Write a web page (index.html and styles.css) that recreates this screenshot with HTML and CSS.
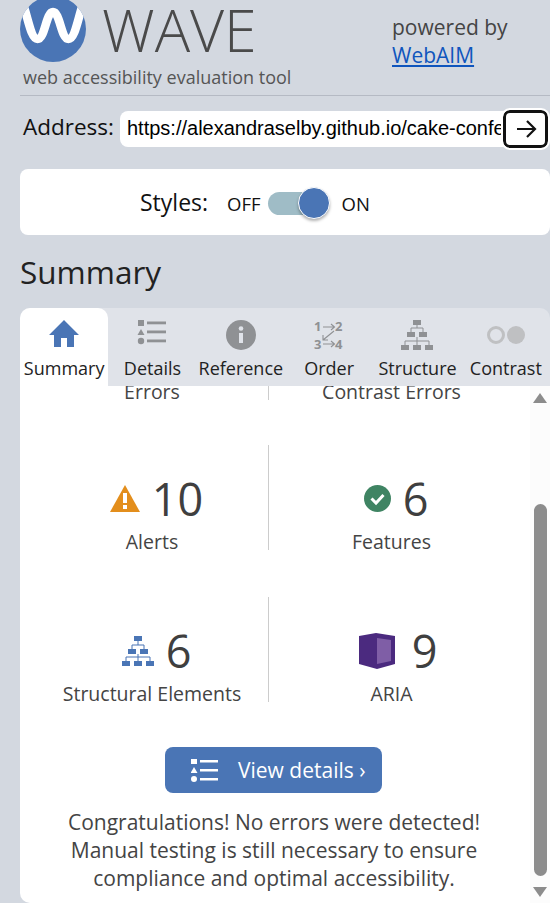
FILE: index.html
```html
<!DOCTYPE html>
<html lang="en">
<head>
    <meta charset="UTF-8">
    <meta name="viewport" content="width=device-width, initial-scale=1.0">
    <title>WAVE</title>
    <link rel="stylesheet" href="styles.css">
</head>
<body>
    <header class="site-header">
        <div class="brand">
            <div class="brand-top">
                <svg class="logo" width="66" height="66" viewBox="0 0 66 66">
                    <clipPath id="logo-clip"><circle cx="33" cy="33" r="33"/></clipPath>
                    <circle cx="33" cy="33" r="33" fill="#4a75b5"/>
                    <path d="M3 8 C8 22 11 43 17.500 43 C25 43 26 16 33 16 C40 16 41 43 48.500 43 C55 43 58 22 63 8" fill="none" stroke="#fff" stroke-width="8.500" clip-path="url(#logo-clip)"/>
                </svg>
                <span class="brand-name">WAVE</span>
            </div>
            <p class="brand-tagline">web accessibility evaluation tool</p>
        </div>
        <div class="powered">
            <span>powered by</span>
            <a href="#">WebAIM</a>
        </div>
    </header>

    <form class="address-bar">
        <label for="address">Address:</label>
        <div class="address-field">
            <input type="text" id="address" value="https://alexandraselby.github.io/cake-confections/">
            <button type="button" class="go-button" aria-label="Go">
                <svg width="22" height="20" viewBox="0 0 22 20"><path d="M2 10H20M12 2L20 10L12 18" fill="none" stroke="#111" stroke-width="2.2"/></svg>
            </button>
        </div>
    </form>

    <div class="styles-card">
        <span class="styles-label">Styles:</span>
        <span class="styles-state">OFF</span>
        <span class="toggle"><span class="toggle-knob"></span></span>
        <span class="styles-state">ON</span>
    </div>

    <h1 class="panel-title">Summary</h1>

    <section class="panel">
        <nav class="tabs">
            <a class="tab tab-active" href="#">
                <svg width="32" height="30" viewBox="0 2 32 30"><path d="M16 2L31 17H26V29H19V20H13V29H6V17H1Z" fill="#4a75b5"/></svg>
                Summary
            </a>
            <a class="tab" href="#">
                <svg width="30" height="30" viewBox="0 2 30 30" fill="#8f9194"><rect x="1" y="2" width="6" height="6"/><path d="M4 11L7.500 17H.5Z"/><circle cx="4" cy="23" r="3.200"/><rect x="10" y="3.500" width="19" height="2.800"/><rect x="10" y="12.500" width="19" height="2.800"/><rect x="10" y="21.500" width="19" height="2.800"/></svg>
                Details
            </a>
            <a class="tab" href="#">
                <svg width="30" height="30" viewBox="0 0 30 30"><circle cx="15" cy="15" r="15" fill="#8f9194"/><circle cx="15" cy="8.500" r="2.300" fill="#e0e3e9"/><rect x="13" y="13" width="4" height="10" fill="#e0e3e9"/></svg>
                Reference
            </a>
            <a class="tab" href="#">
                <svg width="30" height="30" viewBox="0 0 30 30">
                    <text x="0" y="11" class="order-num">1</text>
                    <text x="21" y="11" class="order-num">2</text>
                    <text x="0" y="29" class="order-num">3</text>
                    <text x="21" y="29" class="order-num">4</text>
                    <path d="M9 7H20M17 4L20.500 7L17 10M9 24H20M17 21L20.500 24L17 27M20 11L9 20M9 15V20H14" fill="none" stroke="#8f9194" stroke-width="1.100"/>
                </svg>
                Order
            </a>
            <a class="tab" href="#">
                <svg width="32" height="30" viewBox="0 0 32 30" fill="#8f9194">
                    <rect x="12" y="0" width="8" height="5"/><rect x="6" y="12" width="8" height="5"/><rect x="18" y="12" width="8" height="5"/><rect x="0" y="25" width="8" height="5"/><rect x="12" y="25" width="8" height="5"/><rect x="24" y="25" width="8" height="5"/>
                    <path d="M16 5V8M10 12V8H22V12M16 17V21M4 25V21H28V25M16 21V25" fill="none" stroke="#8f9194"/>
                </svg>
                Structure
            </a>
            <a class="tab" href="#">
                <svg width="38" height="30" viewBox="0 0 38 30"><circle cx="9" cy="15" r="7.500" fill="none" stroke="#bfc0c2" stroke-width="3"/><circle cx="29" cy="15" r="9" fill="#bfc0c2"/></svg>
                Contrast
            </a>
        </nav>

        <div class="panel-body">
            <div class="summary">
                <div class="summary-grid">
                    <div class="stat stat-top">
                        <div class="stat-count"></div>
                        <div class="stat-label">Errors</div>
                    </div>
                    <div class="stat stat-top stat-right">
                        <div class="stat-count"></div>
                        <div class="stat-label">Contrast Errors</div>
                    </div>
                    <div class="stat">
                        <div class="stat-count">
                            <svg width="30" height="28" viewBox="0 0 30 28"><path d="M15 0L30 27H0Z" fill="#e38e1c"/><rect x="13" y="8" width="4" height="10" fill="#fff"/><rect x="13" y="20" width="4" height="4" fill="#fff"/></svg>
                            10
                        </div>
                        <div class="stat-label">Alerts</div>
                    </div>
                    <div class="stat stat-right">
                        <div class="stat-count">
                            <svg width="27" height="27" viewBox="0 0 27 27"><circle cx="13.500" cy="13.500" r="13.500" fill="#3f8463"/><path d="M7.500 13.500L12 18L19.500 10" fill="none" stroke="#fff" stroke-width="3"/></svg>
                            6
                        </div>
                        <div class="stat-label">Features</div>
                    </div>
                    <div class="stat">
                        <div class="stat-count">
                            <svg width="32" height="30" viewBox="0 0 32 30" fill="#4a75b5">
                                <rect x="12" y="0" width="8" height="5"/><rect x="6" y="13" width="8" height="5"/><rect x="18" y="13" width="8" height="5"/><rect x="0" y="25" width="8" height="5"/><rect x="12" y="25" width="8" height="5"/><rect x="24" y="25" width="8" height="5"/>
                                <path d="M16 5V9M10 13V9H22V13M16 18V21M4 25V21H28V25M16 21V25" fill="none" stroke="#4a75b5"/>
                            </svg>
                            6
                        </div>
                        <div class="stat-label">Structural Elements</div>
                    </div>
                    <div class="stat stat-right">
                        <div class="stat-count">
                            <svg class="aria-icon" width="36" height="36" viewBox="0 0 36 36"><path d="M0 3L17 0L36 3V31L18 36L0 31Z" fill="#4b2a7f"/><path d="M18 5L32 7V28L18 31Z" fill="#7f5ea6"/></svg>
                            9
                        </div>
                        <div class="stat-label">ARIA</div>
                    </div>
                </div>
                <a class="details-button" href="#">
                    <svg width="27" height="23" viewBox="0 0 27 23" fill="#fff"><rect x="0" y="0" width="6" height="5"/><path d="M3 8L6.500 14H-.5Z"/><circle cx="3" cy="20" r="3"/><rect x="9" y="1" width="18" height="2.500"/><rect x="9" y="10" width="18" height="2.500"/><rect x="9" y="19" width="18" height="2.500"/></svg>
                    <span>View details ›</span>
                </a>
                <p class="summary-note">Congratulations! No errors were detected! Manual testing is still necessary to ensure compliance and optimal accessibility.</p>
            </div>
            <div class="scrollbar">
                <span class="arrow-up"></span>
                <span class="thumb"></span>
                <span class="arrow-down"></span>
            </div>
        </div>
    </section>
</body>
</html>
```

FILE: styles.css
```css
/* General Styles */
body {
    font-family: "Open Sans", sans-serif;
    margin: 0;
    padding: 0 0 0 20px;
    height: 903px;
    overflow: hidden;
    background-color: #d3d8e0;
    color: #444;
}

/* Header */
.site-header {
    display: flex;
    height: 96px;
    box-sizing: border-box;
    border-bottom: 1px solid #b5bac4;
}

.brand-top {
    display: flex;
    align-items: flex-start;
    margin-top: -4px;
    height: 66px;
}

.brand-name {
    font-size: 59px;
    font-weight: 300;
    line-height: 66px;
    margin-left: 16px;
    color: #4a4a4a;
}

.brand-tagline {
    margin: 3px 0 0 3px;
    font-size: 18px;
    line-height: 24px;
    color: #555;
}

.powered {
    display: flex;
    flex-direction: column;
    margin-left: auto;
    width: 158px;
    padding-top: 13px;
    font-size: 21px;
    line-height: 28px;
}

.powered a {
    color: #0f55bd;
}

/* Address bar */
.address-bar {
    display: flex;
    align-items: center;
    height: 37px;
    margin: 14px 2px 0 3px;
}

.address-bar label {
    font-size: 22.500px;
    line-height: 31px;
    margin-top: -4px;
    color: #111;
    width: 97px;
}

.address-field {
    position: relative;
    flex: 1;
}

#address {
    display: block;
    width: 100%;
    height: 36px;
    box-sizing: border-box;
    padding: 0 44px 0 7px;
    border: none;
    border-radius: 8px;
    background-color: #fff;
    font-family: "Liberation Sans", Arial, sans-serif;
    font-size: 20px;
    color: #000;
}

.go-button {
    position: absolute;
    top: -1px;
    right: 0;
    width: 45px;
    height: 38px;
    display: flex;
    align-items: center;
    justify-content: center;
    padding: 0;
    background-color: #fff;
    border: 3px solid #111;
    border-radius: 7px;
    outline: 2px solid #fff;
}

/* Styles toggle */
.styles-card {
    display: flex;
    align-items: center;
    height: 66px;
    box-sizing: border-box;
    padding: 3px 0 0 120px;
    margin-top: 22px;
    background-color: #fff;
    border-radius: 8px;
    color: #111;
}

.styles-label {
    font-size: 23px;
    margin-right: 19px;
    margin-top: -3px;
}

.styles-state {
    font-size: 18.500px;
}

.toggle {
    position: relative;
    width: 46px;
    height: 23px;
    margin: 0 28px 0 7px;
    background-color: #9fbcc6;
    border-radius: 12px;
}

.toggle-knob {
    position: absolute;
    top: -5px;
    right: -16px;
    width: 32px;
    height: 32px;
    box-sizing: border-box;
    background-color: #4a75b5;
    border: 1px solid #fff;
    border-radius: 50%;
    box-shadow: 0 2px 3px rgba(0, 0, 0, 0.3);
}

/* Panel */
.panel-title {
    margin: 16px 0 0;
    font-size: 31.500px;
    font-weight: 400;
    line-height: 42px;
    color: #222;
}

.panel {
    margin-top: 15px;
}

.tabs {
    display: grid;
    grid-template-columns: repeat(6, 1fr);
    height: 78px;
    background-color: #e0e3e9;
    border-radius: 10px 10px 0 0;
}

.tab {
    display: flex;
    flex-direction: column;
    align-items: center;
    padding-top: 12px;
    font-size: 18px;
    line-height: 25px;
    color: #222;
    text-decoration: none;
    white-space: nowrap;
}

.tab svg {
    margin-bottom: 6px;
}

.tab-active {
    background-color: #fff;
    border-radius: 10px 10px 0 0;
}

.order-num {
    font-size: 13px;
    font-weight: 700;
    fill: #8f9194;
}

.panel-body {
    display: flex;
    height: 517px;
    background-color: #fff;
    border-radius: 0 0 0 10px;
    overflow: hidden;
}

.summary {
    flex: 1;
    padding: 0 16px;
}

.summary-grid {
    display: grid;
    grid-template-columns: 232px 246px;
    row-gap: 47px;
    margin-top: -91px;
}

.stat {
    display: flex;
    flex-direction: column;
    align-items: center;
    height: 105px;
    padding-top: 23px;
    box-sizing: border-box;
}

.stat-top {
    margin-bottom: -2px;
}

.stat-right {
    border-left: 1px solid #ccc;
}

.stat-count {
    display: flex;
    flex-shrink: 0;
    align-items: center;
    gap: 12px;
    height: 61px;
    padding-left: 9px;
    font-size: 45px;
    color: #3f3f3f;
}

.aria-icon {
    margin: 0 5px 0 4px;
}

.stat-label {
    font-size: 19.500px;
    line-height: 26px;
}

.details-button {
    display: flex;
    align-items: center;
    gap: 20px;
    box-sizing: border-box;
    width: 217px;
    height: 46px;
    margin: 45px 0 0 129px;
    padding-left: 26px;
    background-color: #4a75b5;
    border-radius: 8px;
    font-size: 21px;
    color: #fff;
    text-decoration: none;
    white-space: nowrap;
}

.summary-note {
    width: 430px;
    margin: 15px 0 0 23px;
    font-size: 21px;
    line-height: 28px;
    text-align: center;
}

/* Scrollbar */
.scrollbar {
    display: flex;
    flex-direction: column;
    align-items: center;
    width: 20px;
    background-color: #fcfcfc;
}

.arrow-up {
    margin-top: 7px;
    border-left: 7px solid transparent;
    border-right: 7px solid transparent;
    border-bottom: 10px solid #8c8c8c;
}

.thumb {
    width: 13px;
    height: 372px;
    margin-top: 101px;
    background-color: #8c8c8c;
    border-radius: 7px;
}

.arrow-down {
    margin-top: 11px;
    border-left: 7px solid transparent;
    border-right: 7px solid transparent;
    border-top: 10px solid #8c8c8c;
}
```
